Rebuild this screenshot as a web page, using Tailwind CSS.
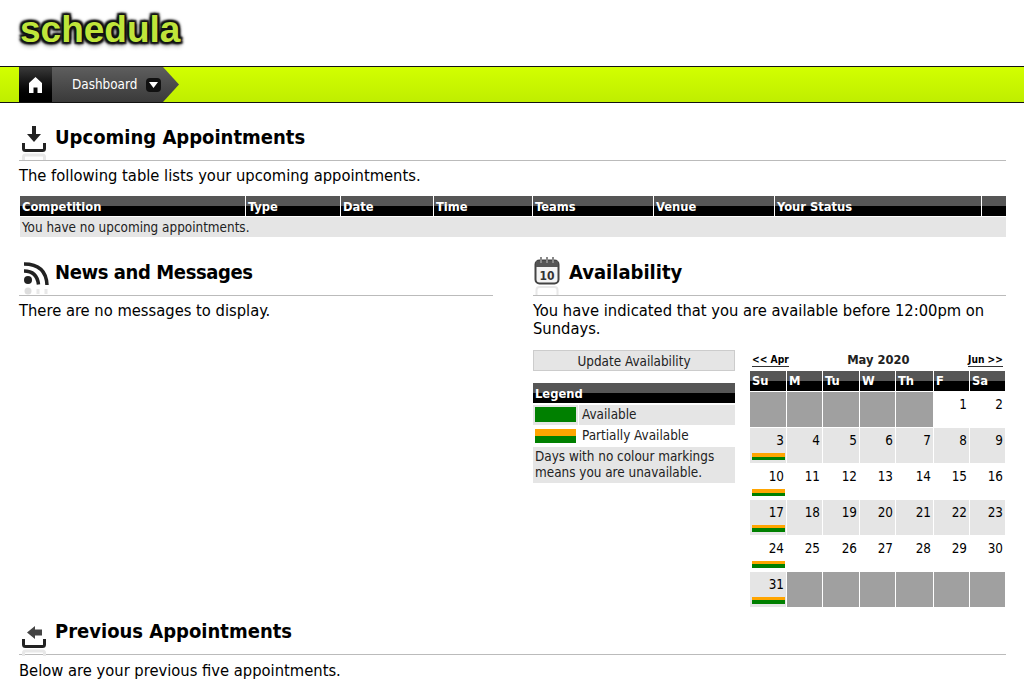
<!DOCTYPE html>
<html>
<head>
    <meta charset="utf-8"/>
    <title>Schedula</title>
    <script src="https://cdn.jsdelivr.net/npm/@tailwindcss/browser@4"></script>
</head>
<body class="bg-white text-black font-['DejaVu_Sans',sans-serif] font-stretch-condensed text-[16.4px] leading-[18px] overflow-hidden h-[682px]">

    <!-- logo -->
    <div class="h-[66px] pl-[20px] pt-[8px]">
        <span class="block font-['Liberation_Sans',sans-serif] font-bold text-[37px] leading-[44px] text-[#bfe53a] [text-shadow:0_0_1px_#111,0_0_2px_#111,0_0_3px_#111,0_0_4px_#111,0_0_5px_#222,2px_2px_2px_#111,-2px_-2px_2px_#111,2px_-2px_2px_#111,-2px_2px_2px_#111,0_4px_5px_#0005]">schedula</span>
    </div>

    <!-- nav -->
    <div class="h-[37px] flex border-y border-[#111] bg-gradient-to-b from-[#d2ff00] to-[#bfee00]">
        <div class="ml-[19px] w-[33px] flex items-center justify-center bg-gradient-to-b from-[#3a3a3a] to-black">
            <svg class="w-[13px] h-[16px]" viewBox="0 0 13 16"><path fill="#fff" d="M6.500 0 13 6V16H8.500V10.500H4.500V16H0V6Z"/></svg>
        </div>
        <div class="w-[127px] flex items-center pl-[20px] gap-[9px] bg-gradient-to-b from-[#5e5e5e] to-[#3a3a3a] text-white text-[13.4px] [clip-path:polygon(0_0,111px_0,100%_50%,111px_100%,0_100%)]">
            <span>Dashboard</span>
            <span class="flex items-center justify-center w-[15px] h-[14px] rounded-[4px] bg-[#111]">
                <svg class="w-[9px] h-[6px]" viewBox="0 0 9 6"><path fill="#fff" d="M0 0H9L4.500 6Z"/></svg>
            </span>
        </div>
    </div>

    <div class="px-[19px] pr-[18px]">
        <!-- upcoming -->
        <div class="mt-[17px] h-[41px] flex items-start border-b border-[#bbb]">
            <svg class="w-[30px] h-[40px] mr-[6px] mt-[5px] shrink-0" viewBox="0 0 30 40">
                <path fill="#222" d="M13 1h4v8h5l-7 8-7-8h5Z"/>
                <path fill="none" stroke="#222" stroke-width="3" d="M4.500 18v5.500q0 2 2 2h17q2 0 2-2V18"/>
                <path fill="none" stroke="#e8e8e8" stroke-width="3" d="M4.500 35v-3q0-2 2-2h17q2 0 2 2v3"/>
            </svg>
            <h2 class="text-[20px] leading-[28px] font-bold mt-[3px]">Upcoming Appointments</h2>
        </div>
        <p class="mt-[6px]">The following table lists your upcoming appointments.</p>

        <div class="mt-[11px] ml-[1px] w-[986px]">
            <div class="flex gap-[1px] h-[20px] text-[12.8px] leading-[21px] font-bold text-white">
                <div class="w-[225px] pl-[2px] bg-gradient-to-b from-[#565656] from-50% to-black to-50%">Competition</div>
                <div class="w-[94px] pl-[2px] bg-gradient-to-b from-[#565656] from-50% to-black to-50%">Type</div>
                <div class="w-[92px] pl-[2px] bg-gradient-to-b from-[#565656] from-50% to-black to-50%">Date</div>
                <div class="w-[98px] pl-[2px] bg-gradient-to-b from-[#565656] from-50% to-black to-50%">Time</div>
                <div class="w-[120px] pl-[2px] bg-gradient-to-b from-[#565656] from-50% to-black to-50%">Teams</div>
                <div class="w-[120px] pl-[2px] bg-gradient-to-b from-[#565656] from-50% to-black to-50%">Venue</div>
                <div class="w-[206px] pl-[2px] bg-gradient-to-b from-[#565656] from-50% to-black to-50%">Your Status</div>
                <div class="flex-1 bg-gradient-to-b from-[#565656] from-50% to-black to-50%"></div>
            </div>
            <div class="mt-[1px] h-[20px] pl-[2px] bg-[#e5e5e5] text-[13.4px] leading-[22px] text-[#222]">You have no upcoming appointments.</div>
        </div>

        <div class="flex mt-[16px]">
            <!-- news -->
            <div class="w-[474px]">
                <div class="h-[43px] flex items-start border-b border-[#bbb]">
                    <svg class="w-[30px] h-[40px] mr-[6px] mt-[3px] shrink-0" viewBox="0 0 30 40">
                        <circle cx="9" cy="24" r="4" fill="#222"/>
                        <path fill="none" stroke="#222" stroke-width="3.500" d="M5 15q13 0 14.500 13.500M5 8q22 0 23 21"/>
                        <circle cx="9" cy="35" r="3.500" fill="#ddd"/>
                        <path fill="none" stroke="#e8e8e8" stroke-width="3" d="M19 33v5M27 33v5"/>
                    </svg>
                    <h2 class="text-[20px] leading-[28px] font-bold mt-[5px] tracking-[-0.4px]">News and Messages</h2>
                </div>
                <p class="mt-[6px]">There are no messages to display.</p>
            </div>

            <!-- availability -->
            <div class="ml-[40px] w-[473px]">
                <div class="h-[43px] flex items-start border-b border-[#bbb]">
                    <svg class="w-[28px] h-[40px] mr-[8px] mt-[3px] shrink-0" viewBox="0 0 28 40">
                        <rect x="2.500" y="4.500" width="23" height="23" rx="4" fill="#f4f4f4" stroke="#444" stroke-width="2"/>
                        <path fill="#555" d="M3 5h22v6H3Z"/>
                        <path stroke="#888" stroke-width="2" d="M8 1v6M14 1v6M20 1v6"/>
                        <path fill="none" stroke="#e8e8e8" stroke-width="2" d="M3.500 39v-5q0-3 3-3h15q3 0 3 3v5"/>
                        <text x="14" y="24" text-anchor="middle" font-size="12" font-weight="bold" fill="#333" font-family="DejaVu Sans">10</text>
                    </svg>
                    <h2 class="text-[20px] leading-[28px] font-bold mt-[5px]">Availability</h2>
                </div>
                <p class="mt-[6px]">You have indicated that you are available before 12:00pm on Sundays.</p>

                <div class="flex mt-[12px]">
                    <div class="w-[202px] mr-[15px] text-[13.4px] text-[#222]">
                        <div class="h-[21px] w-[202px] leading-[21px] bg-[#e5e5e5] border border-[#ccc] text-center">Update Availability</div>
                        <div class="mt-[12px] h-[20px] pl-[2px] font-bold text-[12.8px] leading-[22px] text-white bg-gradient-to-b from-[#565656] from-50% to-black to-50%">Legend</div>
                        <div class="mt-[2px] h-[20px] flex gap-[1px]">
                            <div class="w-[45px] bg-[#e5e5e5] p-[2px]"><div class="h-[15px] bg-[#008000]"></div></div>
                            <div class="flex-1 bg-[#e5e5e5] pl-[3px] leading-[20px]">Available</div>
                        </div>
                        <div class="mt-[1px] h-[20px] flex gap-[1px]">
                            <div class="w-[45px] p-[2px] py-[3px]"><div class="h-[7px] bg-[#ffa500]"></div><div class="h-[7px] bg-[#008000]"></div></div>
                            <div class="flex-1 pl-[3px] leading-[20px]">Partially Available</div>
                        </div>
                        <div class="mt-[1px] h-[36px] bg-[#e5e5e5] px-[2px] leading-[16px] pt-[2px]">Days with no colour markings means you are unavailable.</div>
                    </div>

                    <div class="w-[256px] text-[13.4px]">
                        <div class="h-[20px] flex items-center justify-between pr-[3px] pl-[2px]">
                            <a class="text-[10.2px] font-bold leading-[13px] border-b border-[#333]">&lt;&lt; Apr</a>
                            <span class="font-bold text-[12.8px] text-[#222]">May 2020</span>
                            <a class="text-[10.2px] font-bold leading-[13px] border-b border-[#333]">Jun &gt;&gt;</a>
                        </div>
                        <div class="grid grid-cols-[36px_35px_36px_35px_37px_35px_35px] gap-[1px] mt-[1px]">
                            <div class="h-[20px] pl-[2px] font-bold text-[12.8px] leading-[20px] text-white bg-gradient-to-b from-[#565656] from-50% to-black to-50%">Su</div>
                            <div class="h-[20px] pl-[2px] font-bold text-[12.8px] leading-[20px] text-white bg-gradient-to-b from-[#565656] from-50% to-black to-50%">M</div>
                            <div class="h-[20px] pl-[2px] font-bold text-[12.8px] leading-[20px] text-white bg-gradient-to-b from-[#565656] from-50% to-black to-50%">Tu</div>
                            <div class="h-[20px] pl-[2px] font-bold text-[12.8px] leading-[20px] text-white bg-gradient-to-b from-[#565656] from-50% to-black to-50%">W</div>
                            <div class="h-[20px] pl-[2px] font-bold text-[12.8px] leading-[20px] text-white bg-gradient-to-b from-[#565656] from-50% to-black to-50%">Th</div>
                            <div class="h-[20px] pl-[2px] font-bold text-[12.8px] leading-[20px] text-white bg-gradient-to-b from-[#565656] from-50% to-black to-50%">F</div>
                            <div class="h-[20px] pl-[2px] font-bold text-[12.8px] leading-[20px] text-white bg-gradient-to-b from-[#565656] from-50% to-black to-50%">Sa</div>

                            <div class="h-[35px] bg-[#a0a0a0]"></div>
                            <div class="h-[35px] bg-[#a0a0a0]"></div>
                            <div class="h-[35px] bg-[#a0a0a0]"></div>
                            <div class="h-[35px] bg-[#a0a0a0]"></div>
                            <div class="h-[35px] bg-[#a0a0a0]"></div>
                            <div class="h-[35px] pt-[4px] pr-[2px] text-right">1</div>
                            <div class="h-[35px] pt-[4px] pr-[2px] text-right">2</div>

                            <div class="h-[35px] pt-[4px] pr-[2px] text-right bg-[#e5e5e5]">3<div class="mt-[3px] ml-[2px] mr-[-1px] h-[7px] bg-gradient-to-b from-[#ffa500] from-50% to-[#008000] to-50%"></div></div>
                            <div class="h-[35px] pt-[4px] pr-[2px] text-right bg-[#e5e5e5]">4</div>
                            <div class="h-[35px] pt-[4px] pr-[2px] text-right bg-[#e5e5e5]">5</div>
                            <div class="h-[35px] pt-[4px] pr-[2px] text-right bg-[#e5e5e5]">6</div>
                            <div class="h-[35px] pt-[4px] pr-[2px] text-right bg-[#e5e5e5]">7</div>
                            <div class="h-[35px] pt-[4px] pr-[2px] text-right bg-[#e5e5e5]">8</div>
                            <div class="h-[35px] pt-[4px] pr-[2px] text-right bg-[#e5e5e5]">9</div>

                            <div class="h-[35px] pt-[4px] pr-[2px] text-right">10<div class="mt-[3px] ml-[2px] mr-[-1px] h-[7px] bg-gradient-to-b from-[#ffa500] from-50% to-[#008000] to-50%"></div></div>
                            <div class="h-[35px] pt-[4px] pr-[2px] text-right">11</div>
                            <div class="h-[35px] pt-[4px] pr-[2px] text-right">12</div>
                            <div class="h-[35px] pt-[4px] pr-[2px] text-right">13</div>
                            <div class="h-[35px] pt-[4px] pr-[2px] text-right">14</div>
                            <div class="h-[35px] pt-[4px] pr-[2px] text-right">15</div>
                            <div class="h-[35px] pt-[4px] pr-[2px] text-right">16</div>

                            <div class="h-[35px] pt-[4px] pr-[2px] text-right bg-[#e5e5e5]">17<div class="mt-[3px] ml-[2px] mr-[-1px] h-[7px] bg-gradient-to-b from-[#ffa500] from-50% to-[#008000] to-50%"></div></div>
                            <div class="h-[35px] pt-[4px] pr-[2px] text-right bg-[#e5e5e5]">18</div>
                            <div class="h-[35px] pt-[4px] pr-[2px] text-right bg-[#e5e5e5]">19</div>
                            <div class="h-[35px] pt-[4px] pr-[2px] text-right bg-[#e5e5e5]">20</div>
                            <div class="h-[35px] pt-[4px] pr-[2px] text-right bg-[#e5e5e5]">21</div>
                            <div class="h-[35px] pt-[4px] pr-[2px] text-right bg-[#e5e5e5]">22</div>
                            <div class="h-[35px] pt-[4px] pr-[2px] text-right bg-[#e5e5e5]">23</div>

                            <div class="h-[35px] pt-[4px] pr-[2px] text-right">24<div class="mt-[3px] ml-[2px] mr-[-1px] h-[7px] bg-gradient-to-b from-[#ffa500] from-50% to-[#008000] to-50%"></div></div>
                            <div class="h-[35px] pt-[4px] pr-[2px] text-right">25</div>
                            <div class="h-[35px] pt-[4px] pr-[2px] text-right">26</div>
                            <div class="h-[35px] pt-[4px] pr-[2px] text-right">27</div>
                            <div class="h-[35px] pt-[4px] pr-[2px] text-right">28</div>
                            <div class="h-[35px] pt-[4px] pr-[2px] text-right">29</div>
                            <div class="h-[35px] pt-[4px] pr-[2px] text-right">30</div>

                            <div class="h-[35px] pt-[4px] pr-[2px] text-right bg-[#e5e5e5]">31<div class="mt-[3px] ml-[2px] mr-[-1px] h-[7px] bg-gradient-to-b from-[#ffa500] from-50% to-[#008000] to-50%"></div></div>
                            <div class="h-[35px] bg-[#a0a0a0]"></div>
                            <div class="h-[35px] bg-[#a0a0a0]"></div>
                            <div class="h-[35px] bg-[#a0a0a0]"></div>
                            <div class="h-[35px] bg-[#a0a0a0]"></div>
                            <div class="h-[35px] bg-[#a0a0a0]"></div>
                            <div class="h-[35px] bg-[#a0a0a0]"></div>
                        </div>
                    </div>
                </div>
            </div>
        </div>

        <!-- previous -->
        <div class="mt-[12px] h-[36px] flex items-start border-b border-[#bbb]">
            <svg class="w-[30px] h-[35px] mr-[6px] mt-[5px] shrink-0" viewBox="0 0 30 35">
                <path fill="#444" d="M23 5.500v6h-7v3.500L8 8.500 16 2v3.500Z"/>
                <path fill="none" stroke="#222" stroke-width="3" d="M4.500 15v5.500q0 2 2 2h17q2 0 2-2V15"/>
                <path fill="none" stroke="#e8e8e8" stroke-width="3" d="M4.500 32v-3q0-2 2-2h17q2 0 2 2v3"/>
            </svg>
            <h2 class="text-[20px] leading-[28px] font-bold mt-[-2px]">Previous Appointments</h2>
        </div>
        <p class="mt-[7px]">Below are your previous five appointments.</p>
    </div>
</body>
</html>
